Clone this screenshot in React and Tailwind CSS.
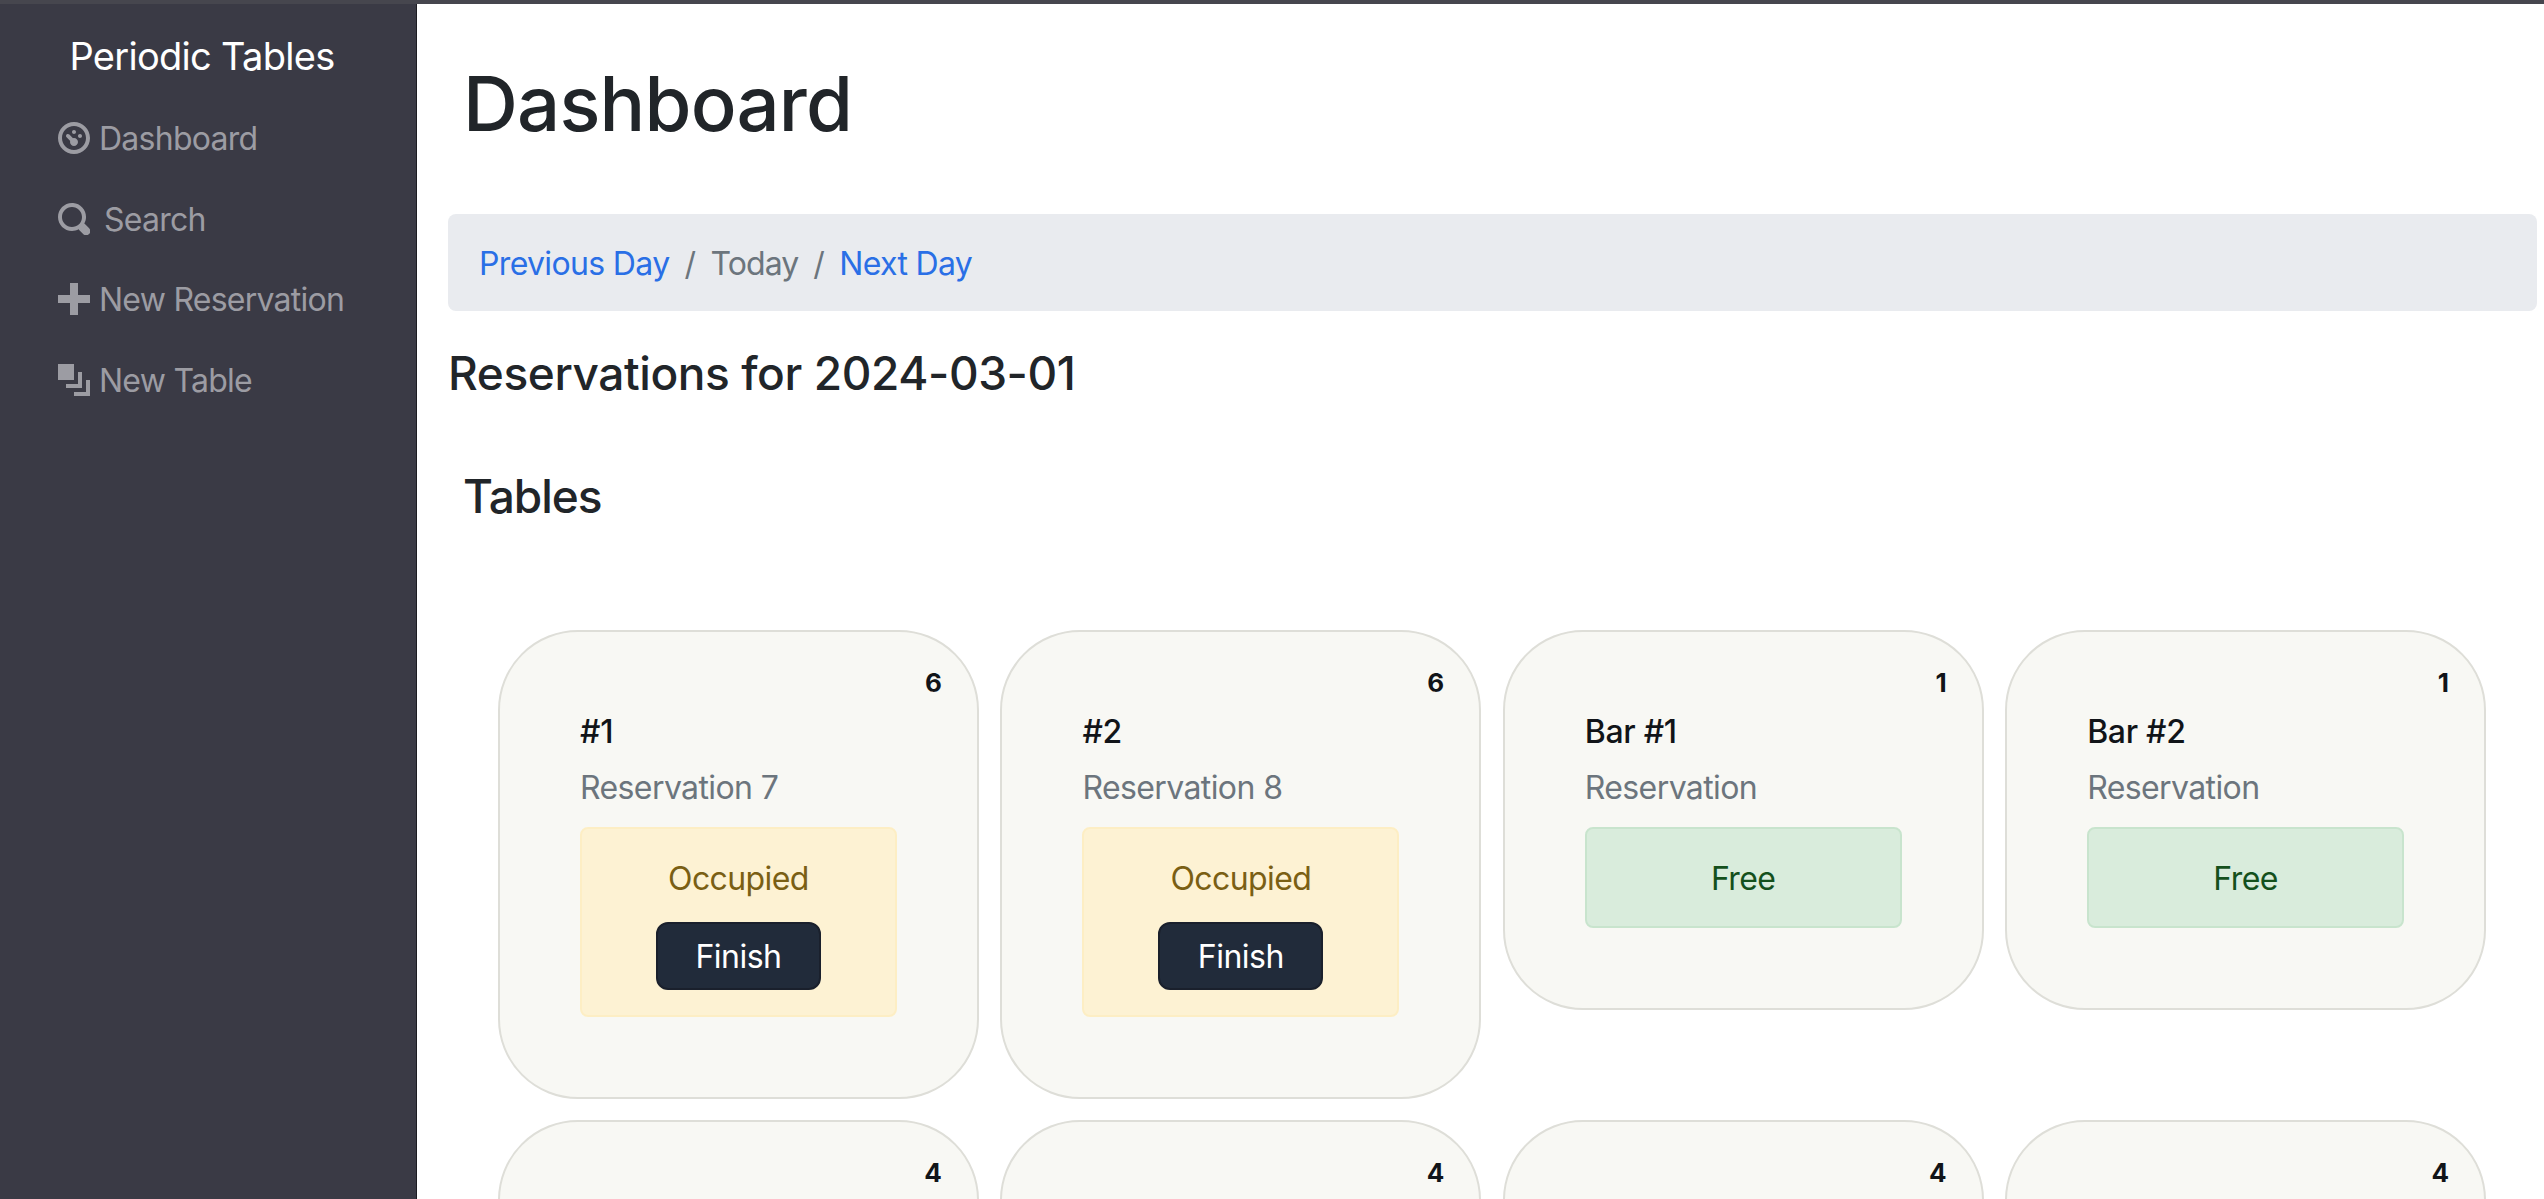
const FONT = "font-['Inter','Liberation_Sans',sans-serif]";

function DashboardIcon() {
  return (
    <svg viewBox="0 0 8 8" className="w-8 h-8 fill-current shrink-0">
      <path d="M4 0c-2.2 0-4 1.8-4 4s1.8 4 4 4 4-1.8 4-4-1.8-4-4-4zm0 1c1.66 0 3 1.34 3 3s-1.34 3-3 3-3-1.34-3-3 1.34-3 3-3zm0 1c-.28 0-.5.22-.5.5s.22.5.5.5.5-.22.5-.5-.22-.5-.5-.5zm-1.66 1a.5.5 0 0 0-.19.84l.91.91c-.02.08-.06.16-.06.25 0 .55.45 1 1 1s1-.45 1-1-.45-1-1-1c-.09 0-.17.04-.25.06l-.91-.91a.5.5 0 0 0-.44-.16.5.5 0 0 0-.06 0zm3.16 0c-.28 0-.5.22-.5.5s.22.5.5.5.5-.22.5-.5-.22-.5-.5-.5z" />
    </svg>
  );
}

function SearchIcon() {
  return (
    <svg viewBox="0 0 8 8" className="w-8 h-8 fill-current shrink-0">
      <path d="M3.5 0c-1.93 0-3.5 1.57-3.5 3.5s1.57 3.5 3.5 3.5c.59 0 1.17-.14 1.66-.41a1 1 0 0 0 .13.13l1 1a1.02 1.02 0 1 0 1.44-1.44l-1-1a1 1 0 0 0-.16-.13c.27-.49.44-1.06.44-1.66 0-1.93-1.57-3.5-3.5-3.5zm0 1c1.39 0 2.5 1.11 2.5 2.5 0 .66-.24 1.27-.66 1.72-.01.01-.02.02-.03.03a1 1 0 0 0-.13.13c-.44.4-1.04.63-1.69.63-1.39 0-2.5-1.11-2.5-2.5s1.11-2.5 2.5-2.5z" />
    </svg>
  );
}

function PlusIcon() {
  return (
    <svg viewBox="0 0 8 8" className="w-8 h-8 fill-current shrink-0">
      <path d="M3 0v3h-3v2h3v3h2v-3h3v-2h-3v-3h-2z" />
    </svg>
  );
}

function LayersIcon() {
  return (
    <svg viewBox="0 0 8 8" className="w-8 h-8 fill-current shrink-0">
      <path d="M0 0v4h4v-4h-4zm5 2v3h-3v1h4v-4h-1zm2 2v3h-3v1h4v-4h-1z" />
    </svg>
  );
}

const navItems = [
  { label: 'Dashboard', icon: DashboardIcon, gap: 'gap-[9px]' },
  { label: 'Search', icon: SearchIcon, gap: 'gap-[14px]' },
  { label: 'New Reservation', icon: PlusIcon, gap: 'gap-[9px]' },
  { label: 'New Table', icon: LayersIcon, gap: 'gap-[9px]' },
];

const tables = [
  { id: 1, name: '#1', capacity: 6, reservation: 'Reservation 7', occupied: true },
  { id: 2, name: '#2', capacity: 6, reservation: 'Reservation 8', occupied: true },
  { id: 3, name: 'Bar #1', capacity: 1, reservation: 'Reservation', occupied: false },
  { id: 4, name: 'Bar #2', capacity: 1, reservation: 'Reservation', occupied: false },
  // next row runs off the bottom, only the capacity shows
  { id: 5, capacity: 4 },
  { id: 6, capacity: 4 },
  { id: 7, capacity: 4 },
  { id: 8, capacity: 4 },
];

function TableCard({ table }) {
  return (
    <div className="relative min-h-[380px] rounded-[80px] border-2 border-[#deded8] bg-[#f8f8f4] px-[80px] pt-[76px] pb-[80px]">
      <span className="absolute right-[35px] top-[35px] text-[26px] leading-[32px] font-bold text-[#111418]">
        {table.capacity}
      </span>
      {table.name && (
        <>
          <p className="text-[32px] leading-[48px] font-medium tracking-[-0.3px] text-[#111418]">{table.name}</p>
          <p className="mt-2 text-[32px] leading-[48px] tracking-[-0.6px] text-[#6c757d]">{table.reservation}</p>
          {table.occupied ? (
            <div className="mt-[15px] flex flex-col items-center rounded-lg border-2 border-[#fdeec4] bg-[#fdf2d3] pt-[26px] pb-[25px]">
              <p className="text-[32px] leading-[48px] tracking-[-0.6px] text-[#7a5f14]">Occupied</p>
              <button className="mt-[19px] h-[68px] w-[165px] rounded-xl border-2 border-[#1a202c] bg-[#212b3a] pt-[2px] text-[32px] tracking-[-0.5px] text-white">
                Finish
              </button>
            </div>
          ) : (
            <div className="mt-[15px] rounded-lg border-2 border-[#c8e4cd] bg-[#d9ecdc] pt-[26px] pb-[23px] text-center">
              <p className="text-[32px] leading-[48px] tracking-[-0.6px] text-[#14501c]">Free</p>
            </div>
          )}
        </>
      )}
    </div>
  );
}

export default function App() {
  return (
    <div className={`${FONT} h-screen overflow-hidden flex flex-col bg-white`}>
      <div className="h-1 shrink-0 bg-[#46464e]" />
      <div className="flex flex-1 min-h-0">
        <aside className="w-[417px] shrink-0 border-r border-[#1c1c22] bg-[#3a3a45]">
          <p className="pt-[26px] pr-[12px] text-center text-[38px] leading-[52px] tracking-[-0.7px] text-white">Periodic Tables</p>
          <nav className="mt-[16px] pl-[58px]">
            {navItems.map(({ label, icon: Icon, gap }) => (
              <div key={label} className={`flex h-[80.6px] items-center ${gap} text-[32px] tracking-[-0.75px] text-[#9c9ca3]`}>
                <Icon />
                <span className="pt-[2px]">{label}</span>
              </div>
            ))}
          </nav>
        </aside>

        <main className="flex-1 min-w-0 pl-[31px] pr-[7px]">
          <h1 className="mt-[51px] pl-[15px] text-[76px] leading-[96px] font-medium tracking-[-0.8px] text-[#212529]">Dashboard</h1>

          <div className="mt-[63px] flex h-[97px] items-center rounded-lg bg-[#e9ebef] pl-[31px] pr-8 pt-[2px] text-[32px] tracking-[-0.65px] text-[#6c757d]">
            <a className="text-[#2a6fe6]">Previous Day</a>
            <span className="px-[15px]">/</span>
            <span className="tracking-[-0.9px]">Today</span>
            <span className="px-[15px]">/</span>
            <a className="text-[#2a6fe6]">Next Day</a>
          </div>

          <h4 className="mt-[33px] text-[46px] leading-[58px] font-medium tracking-[-0.4px] text-[#212529]">Reservations for 2024-03-01</h4>
          <h3 className="mt-[65px] pl-[15px] text-[46px] leading-[58px] font-medium tracking-[-1px] text-[#212529]">Tables</h3>

          <div className="mt-[105px] ml-[50px] mr-[51px] grid grid-cols-4 items-start gap-x-[21.5px] gap-y-[21px]">
            {tables.map((table) => (
              <TableCard key={table.id} table={table} />
            ))}
          </div>
        </main>
      </div>
    </div>
  );
}
